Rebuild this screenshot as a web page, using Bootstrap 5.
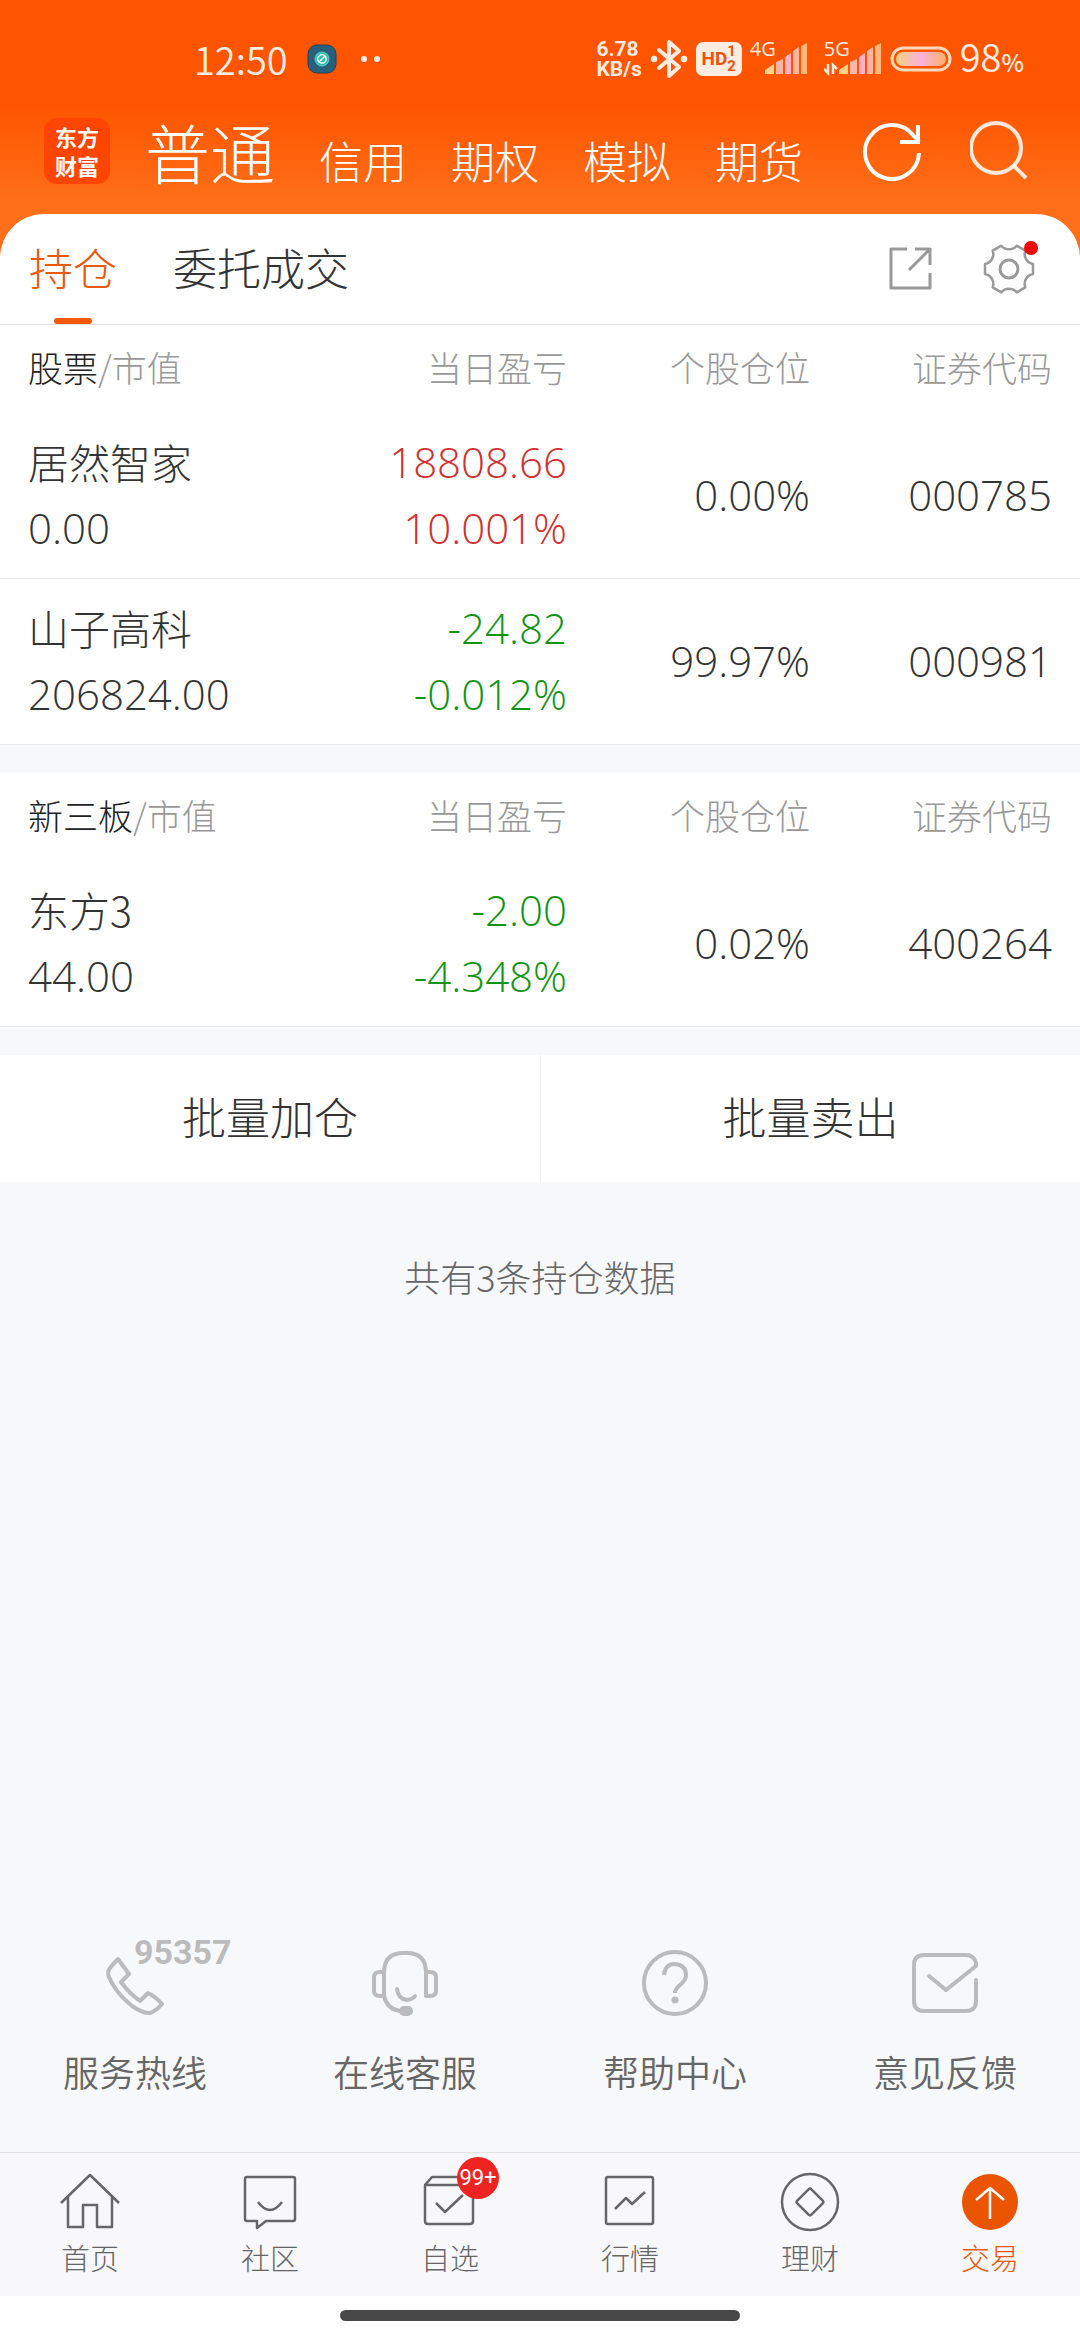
<!DOCTYPE html>
<html lang="zh-CN">
<head>
<meta charset="utf-8">
<meta name="viewport" content="width=device-width, initial-scale=1">
<title>持仓</title>
<link href="https://cdn.jsdelivr.net/npm/bootstrap@5.3.0/dist/css/bootstrap.min.css" rel="stylesheet">
<style>
:root{--ink:#333;--muted:#999;--accent:#e8590c;--page:#f7f8fa;--line:#e2e2e4}
body{font-family:"Noto Sans CJK SC","Noto Sans",sans-serif;font-weight:300;color:var(--ink);background:var(--page);font-size:42px;line-height:66px}
a,button{color:inherit;text-decoration:none}
svg{display:block;fill:none;stroke:currentColor;flex:none}
.icon-btn{border:0;background:none;padding:0;position:relative}
/* header */
.top-area{background:linear-gradient(#ff5500 0,#ff5500 104px,#ff6f19 204px);color:#fff;padding-bottom:46px}
.status-bar{height:118px;padding:0 56px 0 194px;color:#ffece0;font-size:38px;line-height:44px;font-weight:350}
.status-icon{margin-left:19px}
.net-rate{font:700 21px/20px Roboto,sans-serif}
.hd-badge{background:#ffece0;color:#e85510;border-radius:7px;width:46px;height:34px;font:700 19px/34px Roboto,sans-serif}
.hd-sims{font-size:15px;line-height:15px}
.signal{position:relative;width:58px;height:34px;font-family:"Open Sans",sans-serif;font-weight:400}
.signal span{font-size:20px;line-height:20px;position:absolute;left:0;top:-3px}
.pct{font-size:24px;font-weight:500}
.brand-row{height:96px;padding:0 48px 0 44px}
.app-logo{width:66px;height:66px;border-radius:13px;background:#ff4500;font-size:22px;line-height:29px;font-weight:700}
.accounts{font-size:44px;line-height:66px;gap:44px;margin-left:35px}
.accounts .current{font-size:65px}
/* sheet */
.sheet{background:#fff;border-radius:44px 44px 0 0;margin-top:-46px;position:relative}
.tab-row{height:111px;padding:0 45px 0 29px;border-bottom:1px solid var(--line);font-size:44px}
.tab-row nav{gap:56px}
.tab-row nav a{position:relative;line-height:106px;padding-bottom:4px}
.tab-row .current{color:var(--accent)}
.tab-row .current::after{content:"";position:absolute;left:50%;bottom:0;width:38px;height:6px;margin-left:-19px;border-radius:3px;background:#f5570b}
.tools{gap:50px;color:var(--muted)}
.dot{position:absolute;top:-3px;right:-3px;width:14px;height:14px;border-radius:50%;background:#f90006}
/* holdings */
.holdings{width:100%;table-layout:fixed;background:#fff;margin:0}
.holdings th{font-weight:300;font-size:35px;color:var(--muted);height:88px;padding:0 0 4px;line-height:44px}
.holdings th span{color:#222}
.holdings td{padding:16px 0 17px;border-bottom:1px solid #ececee;font-family:"Open Sans","Noto Sans CJK SC",sans-serif}
.holdings th:first-child,.holdings td:first-child{width:30%;padding-left:28px}
.holdings th:last-child,.holdings td:last-child{width:25%;padding-right:28px}
.stock{font-family:"Noto Sans CJK SC",sans-serif;font-size:41px;line-height:64px;padding-bottom:2px}
.up{color:#cf3030}.down{color:#129412}
.gap-bar{height:28px}
.batch{background:#fff;font-size:44px}
.batch button{border:0;background:none;padding:0 0 4px;line-height:123px;font-weight:300}
.batch button+button{border-left:1px solid #f3f3f5}
.total{font-size:36px;color:#666;padding-top:61px}
/* footer */
.services{font-size:36px;line-height:48px;color:#666;font-weight:350;padding-bottom:57px}
.services svg{color:#bbb;stroke-width:4;stroke-linecap:round;stroke-linejoin:round}
.services a{gap:31px}
.phone-mark{position:relative}
.phone-mark span{position:absolute;left:32px;top:-15px;font:700 34px/34px Roboto,sans-serif;color:#bbb}
.bottom-nav{background:#f8f8fa;border-top:1px solid var(--line);height:144px;padding-top:19px;font-size:29px;line-height:42px;color:#666}
.bottom-nav a{gap:4px}
.bottom-nav svg{stroke-width:2.5;stroke-linejoin:round}
.bottom-nav .current{color:var(--accent)}
.count{position:absolute;left:37px;top:-15px;width:42px;height:42px;border-radius:50%;background:#f02323;color:#fff;font:400 22px/42px Roboto,sans-serif}
.home-bar{background:#fff;height:44px;padding-top:14px}
.home-bar div{width:37%;height:11px;border-radius:6px;background:#474747}
</style>
</head>
<body>
<div class="d-flex flex-column min-vh-100">
<header class="top-area">
  <div class="status-bar d-flex align-items-center">
    <span>12:50</span>
    <svg class="status-icon" width="30" height="30" viewBox="0 0 30 30"><rect x="1" y="1" width="28" height="28" rx="9" fill="#28617d" stroke="#1b4458"/><circle cx="15" cy="15" r="7" fill="#22c4ac" stroke="#8fe9dc" stroke-width=".6"/><path d="M12 18a4 4 0 0 1 6-6a4 4 0 0 1-6 6M12 18l6-6" stroke="#fff" stroke-width="1.4"/></svg>
    <svg class="ms-4" width="20" height="8" viewBox="0 0 20 8"><circle cx="3" cy="4" r="3" fill="#ffece0" stroke="none"/><circle cx="16" cy="4" r="3" fill="#ffece0" stroke="none"/></svg>
    <div class="ms-auto d-flex align-items-center">
      <div class="net-rate">6.78<br>KB/s</div>
      <svg class="mx-2" width="38" height="40" viewBox="0 0 38 40" stroke-width="4" stroke-linejoin="round" stroke-linecap="round"><path d="M9 11L29 28L19 37V3L29 12L9 29"/><circle cx="4" cy="20" r="2.5" fill="currentColor" stroke-width="1.5"/><circle cx="34" cy="20" r="2.5" fill="currentColor" stroke-width="1.5"/></svg>
      <div class="hd-badge d-flex align-items-center justify-content-center"><span>HD</span><span class="hd-sims">1<br>2</span></div>
      <div class="signal ms-2"><span>4G</span><svg width="58" height="34" viewBox="0 0 58 34"><g stroke="none"><path d="M15 32v-4l9-6v10z" fill="#ffd28a"/><path d="M26 32V20l7-3v15z" fill="#ffb6a8"/><path d="M35 32V15l6-4v21z" fill="#ffb0c8"/><path d="M43 32V9l6-4v27z" fill="#ffb6a0"/><path d="M51 32V4l6-3v31z" fill="#ffb87a"/></g></svg></div>
      <div class="signal ms-3"><span>5G</span><svg width="58" height="34" viewBox="0 0 58 34"><g stroke="none"><path d="M15 32v-4l9-6v10z" fill="#ffd28a"/><path d="M26 32V20l7-3v15z" fill="#ffb6a8"/><path d="M35 32V15l6-4v21z" fill="#ffb0c8"/><path d="M43 32V9l6-4v27z" fill="#ffb6a0"/><path d="M51 32V4l6-3v31z" fill="#ffb87a"/></g><path d="M4 22v9l-4-4M9 32v-9l4 4" stroke-width="2.5"/></svg></div>
      <svg class="mx-2" width="62" height="26" viewBox="0 0 62 26"><defs><linearGradient id="charge"><stop offset="0" stop-color="#f5d27e"/><stop offset=".5" stop-color="#f9b2dc"/><stop offset="1" stop-color="#fcb068"/></linearGradient></defs><rect x="2" y="2" width="58" height="22" rx="11" stroke="#ffd9bb" stroke-width="3"/><rect x="6" y="6" width="50" height="14" rx="7" fill="url(#charge)" stroke="none"/></svg>
      <span>98<span class="pct">%</span></span>
    </div>
  </div>
  <div class="brand-row d-flex align-items-start">
    <div class="app-logo text-center d-flex flex-column justify-content-center"><span>东方</span><span>财富</span></div>
    <nav class="accounts d-flex align-items-baseline">
      <a class="current" href="#">普通</a><a href="#">信用</a><a href="#">期权</a><a href="#">模拟</a><a href="#">期货</a>
    </nav>
    <div class="ms-auto d-flex gap-5">
      <button class="icon-btn" type="button" aria-label="刷新"><svg width="60" height="66" viewBox="0 0 60 66" stroke-width="4"><path d="M57 35A27 27 0 1 1 51 17L57 24M56 7V24H38"/></svg></button>
      <button class="icon-btn" type="button" aria-label="搜索"><svg width="62" height="66" viewBox="0 0 62 66" stroke-width="4" stroke-opacity=".85"><circle cx="26" cy="30" r="25"/><path d="M43 47L56 60"/></svg></button>
    </div>
  </div>
</header>
<main class="flex-grow-1 d-flex flex-column">
  <div class="sheet">
    <div class="tab-row d-flex justify-content-between align-items-center">
      <nav class="d-flex"><a class="current" href="#">持仓</a><a href="#">委托成交</a></nav>
      <div class="tools d-flex align-items-center">
        <button class="icon-btn" type="button" aria-label="分享"><svg width="44" height="44" viewBox="0 0 44 44" stroke-width="3" stroke-linejoin="round"><path d="M18 2H2V41H41V26M26 2H41V18M41 2L20 23"/></svg></button>
        <button class="icon-btn" type="button" aria-label="设置"><svg width="52" height="50" viewBox="-26 -25 52 50" stroke-width="2.5" stroke-linejoin="round"><path d="M24 -5V5A10 10 0 0 0 16.300 18.300L7.700 23.300A10 10 0 0 0 -7.700 23.300L-16.300 18.300A10 10 0 0 0 -24 5V-5A10 10 0 0 0 -16.300 -18.300L-7.700 -23.300A10 10 0 0 0 7.700 -23.300L16.300 -18.300A10 10 0 0 0 24 -5Z"/><circle r="9" stroke-width="3"/></svg><span class="dot"></span></button>
      </div>
    </div>
  </div>
  <table class="holdings">
    <thead><tr><th><span>股票</span>/市值</th><th class="text-end">当日盈亏</th><th class="text-end">个股仓位</th><th class="text-end">证券代码</th></tr></thead>
    <tbody>
      <tr><td><div class="stock">居然智家</div><div>0.00</div></td><td class="text-end up"><div>18808.66</div><div>10.001%</div></td><td class="text-end">0.00%</td><td class="text-end">000785</td></tr>
      <tr><td><div class="stock">山子高科</div><div>206824.00</div></td><td class="text-end down"><div>-24.82</div><div>-0.012%</div></td><td class="text-end">99.97%</td><td class="text-end">000981</td></tr>
    </tbody>
  </table>
  <div class="gap-bar"></div>
  <table class="holdings">
    <thead><tr><th><span>新三板</span>/市值</th><th class="text-end">当日盈亏</th><th class="text-end">个股仓位</th><th class="text-end">证券代码</th></tr></thead>
    <tbody>
      <tr><td><div class="stock">东方3</div><div>44.00</div></td><td class="text-end down"><div>-2.00</div><div>-4.348%</div></td><td class="text-end">0.02%</td><td class="text-end">400264</td></tr>
    </tbody>
  </table>
  <div class="gap-bar"></div>
  <div class="batch d-flex"><button class="col-6" type="button">批量加仓</button><button class="col-6" type="button">批量卖出</button></div>
  <p class="total text-center mb-0">共有3条持仓数据</p>
  <div class="services row g-0 mt-auto text-center">
    <a class="col-3 d-flex flex-column align-items-center" href="#"><div class="phone-mark"><svg width="66" height="66" viewBox="0 0 66 66"><path d="M16 9L27 24L19 32Q27 43 38 51L46 43Q54 47 60 54Q54 61 48 63Q42 64 30 56Q13 42 7 27Q5 22 8 18Q12 13 16 9Z"/></svg><span>95357</span></div>服务热线</a>
    <a class="col-3 d-flex flex-column align-items-center" href="#"><svg width="66" height="66" viewBox="0 0 66 66"><path d="M12 46V23Q12 3 31 3H35Q54 3 54 23V46H58Q64 46 64 41V27Q64 22 58 22H54M12 22H8Q2 22 2 27V41Q2 46 8 46H12Q15 59 28 61M25 39Q26 49 35 50Q41 49 43 46"/><rect x="29" y="58" width="10" height="6" rx="3" fill="currentColor"/></svg>在线客服</a>
    <a class="col-3 d-flex flex-column align-items-center" href="#"><svg width="66" height="66" viewBox="0 0 66 66"><circle cx="33" cy="33" r="31"/><path d="M22 25Q23 14 33 14Q44 15 44 25Q44 30 38 35Q33 39 33 43" stroke-linecap="butt"/><circle cx="33" cy="50" r="3.5" fill="currentColor" stroke="none"/></svg>帮助中心</a>
    <a class="col-3 d-flex flex-column align-items-center" href="#"><svg width="66" height="66" viewBox="0 0 66 66"><path d="M64 30V51Q64 61 54 61H12Q2 61 2 51V15Q2 5 12 5H54Q62 5 64 13V16L34 40L17 26"/></svg>意见反馈</a>
  </div>
</main>
<footer>
  <nav class="bottom-nav row g-0 text-center">
    <a class="col-2 d-flex flex-column align-items-center" href="#"><svg width="60" height="60" viewBox="0 0 60 60"><path d="M1 31L30 3L59 31M8 25V55H23V33H37V55H52V25"/></svg>首页</a>
    <a class="col-2 d-flex flex-column align-items-center" href="#"><svg width="60" height="60" viewBox="0 0 60 60"><path d="M7 5H53Q55 5 55 7V47Q55 49 53 49H26L17 56V49H7Q5 49 5 47V7Q5 5 7 5ZM18 30Q30 46 42 30"/></svg>社区</a>
    <a class="col-2 d-flex flex-column align-items-center" href="#"><div class="position-relative"><svg width="60" height="60" viewBox="0 0 60 60"><path d="M5 13L12 5H47L53 13V49Q53 52 50 52H8Q5 52 5 49V13H53M16 31L25 40L43 23"/></svg><span class="count">99+</span></div>自选</a>
    <a class="col-2 d-flex flex-column align-items-center" href="#"><svg width="60" height="60" viewBox="0 0 60 60"><rect x="6" y="5" width="47" height="47" rx="2"/><path d="M15 37L26 26L32 32L45 20"/></svg>行情</a>
    <a class="col-2 d-flex flex-column align-items-center" href="#"><svg width="60" height="60" viewBox="0 0 60 60"><circle cx="30" cy="30" r="28"/><rect x="20" y="20" width="20" height="20" rx="2" transform="rotate(45 30 30)"/></svg>理财</a>
    <a class="col-2 d-flex flex-column align-items-center current" href="#"><svg width="60" height="60" viewBox="0 0 60 60"><circle cx="30" cy="30" r="28" fill="#eb5502" stroke="none"/><path d="M30 47V17M16 28L30 16L44 28" stroke="#fff"/></svg>交易</a>
  </nav>
  <div class="home-bar"><div class="mx-auto"></div></div>
</footer>
</div>
<script src="https://cdn.jsdelivr.net/npm/bootstrap@5.3.0/dist/js/bootstrap.bundle.min.js"></script>
</body>
</html>
